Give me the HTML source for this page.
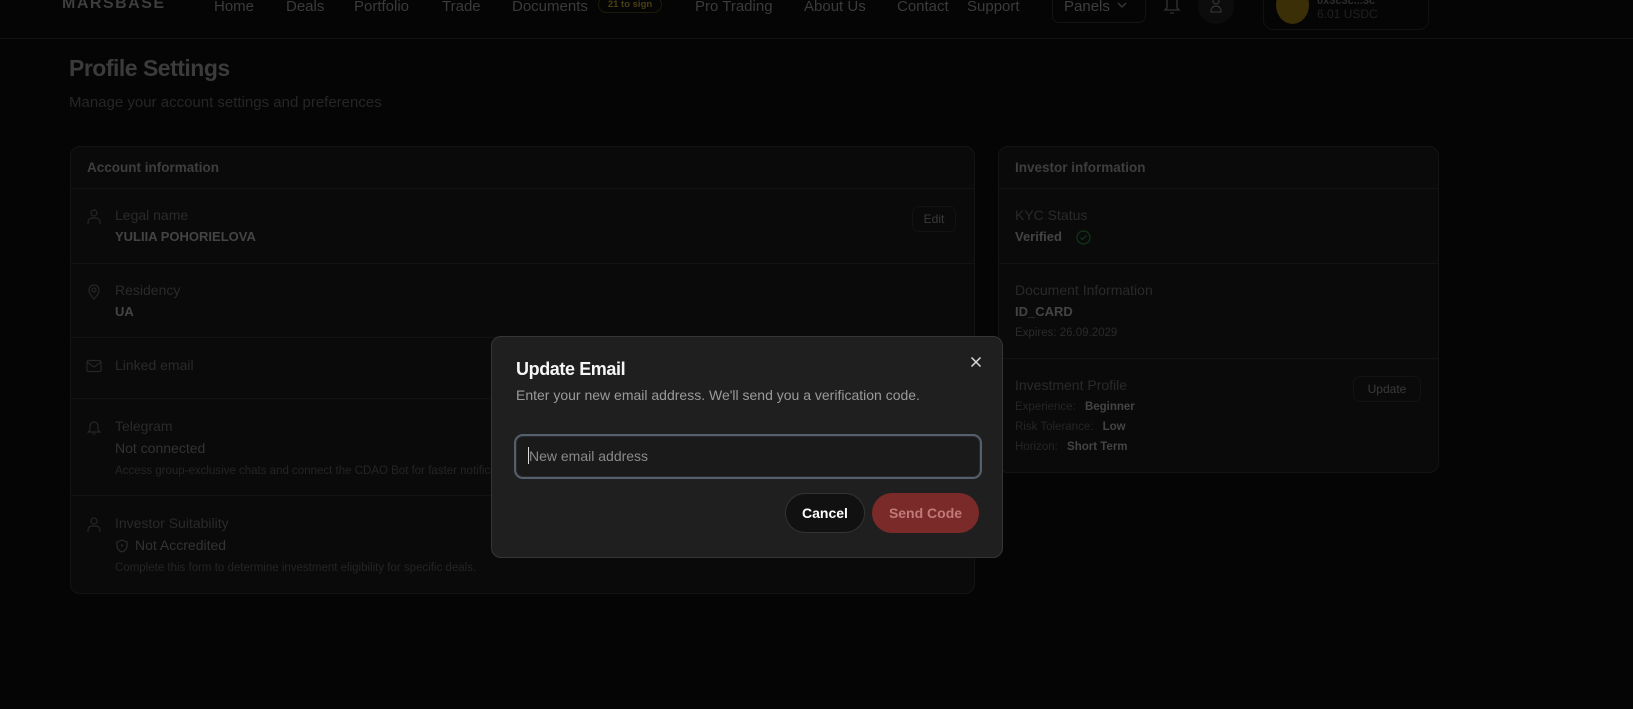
<!DOCTYPE html>
<html><head><meta charset="utf-8"><style>
*{box-sizing:border-box;margin:0;padding:0}
body{width:1633px;height:709px;background:#050505;font-family:"Liberation Sans",sans-serif;position:relative;overflow:hidden;color:#444}
.a{position:absolute;white-space:nowrap}
.nav{font-size:15px;color:#3b3b3b;top:-2px}
.card{position:absolute;background:#0a0a0a;border:1px solid #141414;border-radius:10px}
.hr{position:absolute;left:0;right:0;height:1px;background:#131313}
.lbl{font-size:14px;color:#2a2a2a}
.val{font-size:13px;color:#444;font-weight:bold}
.sm{font-size:11.5px;color:#252525}
svg{position:absolute}
</style></head><body>
<!-- header -->
<div class="a" style="left:62px;top:-5px;font-size:16px;font-weight:bold;letter-spacing:1.5px;color:#3d3d3d">MARSBASE</div>
<div class="a nav" style="left:214px">Home</div>
<div class="a nav" style="left:286px">Deals</div>
<div class="a nav" style="left:354px">Portfolio</div>
<div class="a nav" style="left:442px">Trade</div>
<div class="a nav" style="left:512px">Documents</div>
<div class="a" style="left:598px;top:-4px;width:64px;height:17px;border:1px solid #1e1a08;border-radius:9px;font-size:9.5px;color:#4a4012;font-weight:bold;text-align:center;line-height:15px">21 to sign</div>
<div class="a nav" style="left:695px">Pro Trading</div>
<div class="a nav" style="left:804px">About Us</div>
<div class="a nav" style="left:897px">Contact</div>
<div class="a nav" style="left:967px">Support</div>
<div class="a" style="left:1052px;top:-12px;width:94px;height:35px;border:1px solid #141414;border-radius:7px"></div>
<div class="a" style="left:1064px;top:-2px;font-size:15px;color:#3e3e3e">Panels</div>
<svg style="left:1117px;top:2px" width="10" height="7" viewBox="0 0 10 7" fill="none" stroke="#3a3a3a" stroke-width="1.3"><path d="M1 1l4 4 4-4"/></svg>
<svg style="left:1163px;top:-4px" width="18" height="20" viewBox="0 0 18 20" fill="none" stroke="#333" stroke-width="1.3"><path d="M4 12V5a5 5 0 0 1 10 0v7l2 2H2z M7 17h4"/></svg>
<div class="a" style="left:1198px;top:-12px;width:36px;height:36px;border-radius:50%;background:#0c0c0c"></div>
<svg style="left:1209px;top:-2px" width="14" height="16" viewBox="0 0 14 16" fill="none" stroke="#333" stroke-width="1.2"><circle cx="7" cy="3" r="3"/><path d="M2 13a5 5 0 0 1 10 0v1H2z"/></svg>
<div class="a" style="left:1263px;top:-20px;width:166px;height:50px;border:1px solid #111;border-radius:10px"></div>
<div class="a" style="left:1276px;top:-14px;width:33px;height:38px;border-radius:50%;background:#3a2f06"></div>
<div class="a" style="left:1317px;top:-5px;font-size:11px;color:#2c2c2c;font-weight:bold">0x3c3c...3c</div>
<div class="a" style="left:1317px;top:7px;font-size:12px;color:#202020">6.01 USDC</div>
<div class="a" style="left:0;right:0;top:38px;height:1px;background:#101010"></div>

<div class="a" style="left:69px;top:55px;font-size:23px;font-weight:bold;color:#3b3b3b;letter-spacing:-0.5px">Profile Settings</div>
<div class="a" style="left:69px;top:94px;font-size:15px;color:#262626">Manage your account settings and preferences</div>

<!-- left card -->
<div class="card" style="left:70px;top:146px;width:905px;height:448px">
  <div class="a" style="left:16px;top:13px;font-size:13.5px;font-weight:bold;color:#3e3e3e">Account information</div>
  <div class="hr" style="top:41px"></div>
  <svg style="left:16px;top:62px" width="14" height="16" viewBox="0 0 14 16" fill="none" stroke="#262626" stroke-width="1.2"><circle cx="7" cy="4" r="3"/><path d="M1 15v-2a4 4 0 0 1 4-4h4a4 4 0 0 1 4 4v2"/></svg>
  <div class="a lbl" style="left:44px;top:60px">Legal name</div>
  <div class="a val" style="left:44px;top:82px">YULIIA POHORIELOVA</div>
  <div class="a" style="left:841px;top:59px;width:44px;height:26px;border:1px solid #131313;border-radius:7px;font-size:12px;color:#3a3a3a;text-align:center;line-height:24px">Edit</div>
  <div class="hr" style="top:116px"></div>
  <svg style="left:16px;top:137px" width="14" height="16" viewBox="0 0 14 16" fill="none" stroke="#262626" stroke-width="1.2"><path d="M7 15s5-5 5-9a5 5 0 0 0-10 0c0 4 5 9 5 9z"/><circle cx="7" cy="6" r="2"/></svg>
  <div class="a lbl" style="left:44px;top:135px">Residency</div>
  <div class="a val" style="left:44px;top:157px">UA</div>
  <div class="hr" style="top:190px"></div>
  <svg style="left:15px;top:212px" width="16" height="14" viewBox="0 0 16 14" fill="none" stroke="#262626" stroke-width="1.2"><rect x="1" y="1.5" width="14" height="11" rx="1.5"/><path d="M1 3l7 5 7-5"/></svg>
  <div class="a lbl" style="left:44px;top:210px">Linked email</div>
  <div class="hr" style="top:251px"></div>
  <svg style="left:16px;top:273px" width="14" height="16" viewBox="0 0 14 16" fill="none" stroke="#262626" stroke-width="1.2"><path d="M3 10V6a4 4 0 0 1 8 0v4l2 2H1z M5.5 14h3"/></svg>
  <div class="a lbl" style="left:44px;top:271px">Telegram</div>
  <div class="a" style="left:44px;top:293px;font-size:14px;color:#333">Not connected</div>
  <div class="a sm" style="left:44px;top:318px">Access group-exclusive chats and connect the CDAO Bot for faster notifications</div>
  <div class="hr" style="top:348px"></div>
  <svg style="left:16px;top:370px" width="14" height="16" viewBox="0 0 14 16" fill="none" stroke="#262626" stroke-width="1.2"><circle cx="7" cy="4" r="3"/><path d="M1 15v-2a4 4 0 0 1 4-4h4a4 4 0 0 1 4 4v2"/></svg>
  <div class="a lbl" style="left:44px;top:368px">Investor Suitability</div>
  <svg style="left:45px;top:392px" width="12" height="14" viewBox="0 0 12 14" fill="none" stroke="#2c2c2c" stroke-width="1.2"><path d="M6 1l5 2v4c0 3-2.5 5-5 6-2.5-1-5-3-5-6V3z"/><path d="M6 5v3"/></svg>
  <div class="a" style="left:64px;top:390px;font-size:14px;color:#333">Not Accredited</div>
  <div class="a sm" style="left:44px;top:415px">Complete this form to determine investment eligibility for specific deals.</div>
</div>

<!-- right card -->
<div class="card" style="left:998px;top:146px;width:441px;height:327px">
  <div class="a" style="left:16px;top:13px;font-size:13.5px;font-weight:bold;color:#3e3e3e">Investor information</div>
  <div class="hr" style="top:41px"></div>
  <div class="a lbl" style="left:16px;top:60px">KYC Status</div>
  <div class="a val" style="left:16px;top:82px">Verified</div>
  <svg style="left:77px;top:83px" width="15" height="15" viewBox="0 0 15 15" fill="none" stroke="#11381c" stroke-width="1.2"><circle cx="7.5" cy="7.5" r="6.5"/><path d="M4.5 7.5l2 2 4-4"/></svg>
  <div class="hr" style="top:116px"></div>
  <div class="a lbl" style="left:16px;top:135px">Document Information</div>
  <div class="a val" style="left:16px;top:157px">ID_CARD</div>
  <div class="a sm" style="left:16px;top:180px;color:#2a2a2a">Expires: 26.09.2029</div>
  <div class="hr" style="top:211px"></div>
  <div class="a lbl" style="left:16px;top:230px">Investment Profile</div>
  <div class="a" style="left:354px;top:229px;width:68px;height:26px;border:1px solid #131313;border-radius:7px;font-size:12px;color:#3a3a3a;text-align:center;line-height:24px">Update</div>
  <div class="a sm" style="left:16px;top:254px">Experience: <b style="color:#444;margin-left:6px">Beginner</b></div>
  <div class="a sm" style="left:16px;top:274px">Risk Tolerance: <b style="color:#444;margin-left:6px">Low</b></div>
  <div class="a sm" style="left:16px;top:294px">Horizon: <b style="color:#444;margin-left:6px">Short Term</b></div>
</div>

<!-- modal -->
<div class="a" style="left:491px;top:336px;width:512px;height:222px;background:#1f1f1f;border:1px solid #363636;border-radius:10px">
  <div class="a" style="left:24px;top:22px;font-size:18px;font-weight:bold;color:#f5f5f5;letter-spacing:-0.4px">Update Email</div>
  <div class="a" style="left:24px;top:50px;font-size:14px;color:#9a9a9a">Enter your new email address. We'll send you a verification code.</div>
  <svg style="left:478px;top:19px" width="12" height="12" viewBox="0 0 12 12" stroke="#ddd" stroke-width="1.5"><path d="M1.5 1.5l9 9M10.5 1.5l-9 9"/></svg>
  <div class="a" style="left:22px;top:97px;width:468px;height:45px;border:2px solid #55606f;border-radius:9px;background:#1a1a1a;box-shadow:inset 0 0 0 1px #2a2a2a"></div>
  <div class="a" style="left:36px;top:110px;width:1px;height:17px;background:#ddd"></div>
  <div class="a" style="left:37px;top:111px;font-size:14px;color:#8a8a8a">New email address</div>
  <div class="a" style="left:293px;top:156px;width:80px;height:40px;border:1px solid #333;border-radius:20px;background:#111;color:#fff;font-size:14px;font-weight:bold;text-align:center;line-height:38px">Cancel</div>
  <div class="a" style="left:380px;top:156px;width:107px;height:40px;border-radius:20px;background:#7a2a29;color:#c07a79;font-size:14px;font-weight:bold;text-align:center;line-height:40px">Send Code</div>
</div>
</body></html>
